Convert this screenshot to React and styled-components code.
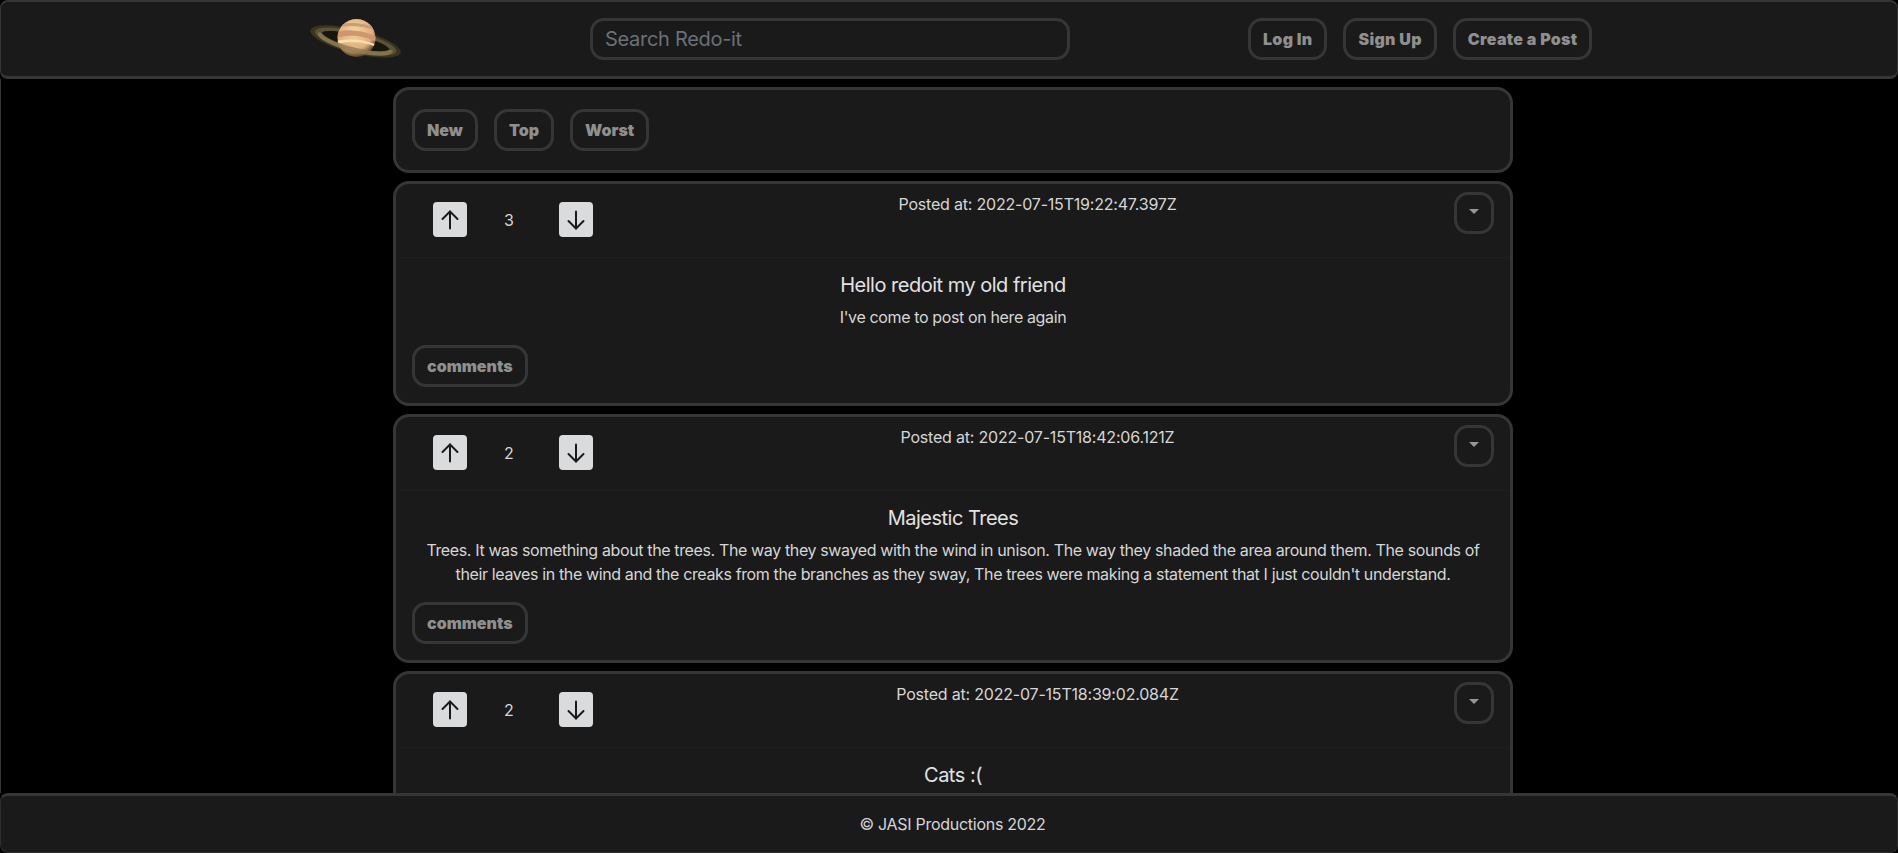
import React from 'react';
import styled, { createGlobalStyle } from 'styled-components';

const GlobalStyle = createGlobalStyle`
  html, body {
    margin: 0;
    height: 100%;
    overflow: hidden;
    background: #000;
    font-family: Inter, 'Liberation Sans', sans-serif;
  }
  * { box-sizing: border-box; }
`;

const Page = styled.div`
  height: 853px;
  display: flex;
  flex-direction: column;
  background: #000;
`;

const Header = styled.header`
  flex: 0 0 79px;
  display: flex;
  align-items: center;
  padding-left: 307px;
  background: #1a1a1a;
  border: 3px solid #363636;
  border-top-width: 2px;
  border-left-width: 1px;
  border-right-width: 1px;
  border-radius: 8px;
`;

const LogoBox = styled.div`
  width: 95px;
  height: 46px;
  margin-right: 187px;
`;

const SearchBox = styled.input`
  width: 480px;
  height: 42px;
  padding: 0 12px;
  background: #1a1a1a;
  border: 3px solid #363636;
  border-radius: 14px;
  color: #ddd;
  font-family: inherit;
  font-size: 20px;
  letter-spacing: -0.3px;
  outline: none;
  margin-right: 178px;
  &::placeholder { color: #6c7078; opacity: 1; }
`;

const HeaderButtons = styled.div`
  display: flex;
  gap: 16px;
`;

const PillButton = styled.button`
  height: 42px;
  padding: 0 12px;
  background: #1a1a1a;
  border: 3px solid #363636;
  border-radius: 14px;
  color: #8f8f8f;
  font-family: inherit;
  font-size: 16px;
  font-weight: 900;
`;

const HeaderButton = styled(PillButton)`
  letter-spacing: 0.3px;
`;

const FeedWrap = styled.div`
  flex: 1;
  min-height: 0;
  display: flex;
  border-left: 1px solid #363636;
`;

const Feed = styled.main`
  flex: 0 0 1120px;
  margin-left: 392px;
  padding-top: 8px;
  display: flex;
  flex-direction: column;
  gap: 8px;
  overflow: hidden;
`;

const SortCard = styled.section`
  flex: 0 0 86px;
  display: flex;
  align-items: center;
  gap: 16px;
  padding: 0 16px;
  background: #1a1a1a;
  border: 3px solid #363636;
  border-radius: 16px;
`;

const PostCard = styled.article`
  flex: 0 0 auto;
  background: #1a1a1a;
  border: 3px solid #363636;
  border-radius: 16px;
  padding-bottom: 16px;
`;

const PostTop = styled.div`
  height: 74px;
  border-bottom: 1px solid #1e1e1e;
  display: flex;
  align-items: flex-start;
  padding: 0 16px 0 37px;
`;

const Votes = styled.div`
  margin-top: 18px;
  display: flex;
  align-items: center;
`;

const VoteButton = styled.button`
  width: 34px;
  height: 35px;
  padding: 0;
  display: flex;
  align-items: center;
  justify-content: center;
  background: #dadbdd;
  border: none;
  border-radius: 4px;
  color: #1a1a1a;
`;

const Score = styled.span`
  width: 92px;
  padding-right: 8px;
  text-align: center;
  color: #d6d6d6;
  font-size: 16px;
`;

const PostedAt = styled.div`
  flex: 1;
  padding: 9px 0 0 28px;
  text-align: center;
  color: #d6d6d6;
  font-size: 16px;
  line-height: 22px;
  letter-spacing: -0.2px;
`;

const MenuButton = styled.button`
  margin-top: 8px;
  width: 40px;
  height: 42px;
  display: flex;
  align-items: center;
  justify-content: center;
  padding: 0 0 4px;
  background: #1a1a1a;
  border: 3px solid #363636;
  border-radius: 14px;
`;

const Caret = styled.span`
  width: 0;
  height: 0;
  border-left: 5px solid transparent;
  border-right: 5px solid transparent;
  border-top: 5px solid #969696;
`;

const PostBody = styled.div`
  padding: 12px 24px 0;
  text-align: center;
  color: #d6d6d6;
`;

const PostTitle = styled.h2`
  margin: 0 0 5px;
  font-size: 20px;
  line-height: 30px;
  font-weight: 400;
  letter-spacing: -0.5px;
  color: #e2e2e2;
`;

const PostText = styled.p`
  margin: 0;
  font-size: 16px;
  line-height: 24px;
  letter-spacing: -0.37px;
`;

const CommentsRow = styled.div`
  padding: 16px 16px 0;
`;

const Footer = styled.footer`
  flex: 0 0 60px;
  display: flex;
  align-items: center;
  justify-content: center;
  padding-left: 7px;
  background: #1a1a1a;
  border: 1px solid #2e2e2e;
  border-top: 3px solid #363636;
  border-radius: 8px;
  color: #d6d6d6;
  font-size: 16px;
  letter-spacing: -0.28px;
`;

function ArrowUp() {
  return (
    <svg width="24" height="24" viewBox="0 0 24 24" fill="none" stroke="currentColor" strokeWidth="2" strokeLinecap="round" strokeLinejoin="round">
      <path d="M12 20.5V3.5" />
      <path d="M4.5 11L12 3.5L19.5 11" />
    </svg>
  );
}

function ArrowDown() {
  return (
    <svg width="24" height="24" viewBox="0 0 24 24" fill="none" stroke="currentColor" strokeWidth="2" strokeLinecap="round" strokeLinejoin="round">
      <path d="M12 3.5V20.5" />
      <path d="M4.5 13L12 20.5L19.5 13" />
    </svg>
  );
}

// planet at (48.5, 22), ring tilted 14deg around (47.5, 25.5)
function SaturnLogo() {
  return (
    <svg width="95" height="46" viewBox="0 0 95 46">
      <defs>
        <radialGradient id="planetShade" cx="45%" cy="32%" r="72%">
          <stop offset="0%" stopColor="#f4d3a4" />
          <stop offset="66%" stopColor="#e0ae7c" />
          <stop offset="100%" stopColor="#3e2a18" />
        </radialGradient>
        <clipPath id="planetClip">
          <circle cx="48.5" cy="22" r="19" />
        </clipPath>
        <filter id="soft">
          <feGaussianBlur stdDeviation="0.5" />
        </filter>
      </defs>
      <g filter="url(#soft)">
        <g transform="rotate(14 47.5 25.5)">
          <ellipse cx="47.5" cy="25.5" rx="46.5" ry="12" fill="#37351f" />
          <ellipse cx="47.5" cy="25.5" rx="42" ry="10" fill="#5a5238" />
          <ellipse cx="47.5" cy="25.5" rx="35" ry="6.5" fill="#14130e" />
        </g>
        <circle cx="48.5" cy="22" r="19" fill="url(#planetShade)" />
        <g clipPath="url(#planetClip)">
          <path d="M28 9Q48 4 69 12L69 15Q48 7 28 12Z" fill="#c99c72" />
          <path d="M28 16Q48 11 69 21L69 26Q48 16 28 22Z" fill="#cf9670" />
          <path d="M28 25Q48 20 69 29L69 31Q48 23 28 28Z" fill="#f9dfad" />
        </g>
        <g transform="rotate(14 47.5 25.5)">
          <path d="M11 25.5A36.5 8.5 0 0 0 84 25.5" fill="none" stroke="#8d7c56" strokeWidth="4.5" opacity="0.8" />
        </g>
      </g>
    </svg>
  );
}

const posts = [
  { id: 1, score: 3, posted: '2022-07-15T19:22:47.397Z', title: 'Hello redoit my old friend', text: "I've come to post on here again", showComments: true },
  { id: 2, score: 2, posted: '2022-07-15T18:42:06.121Z', title: 'Majestic Trees', text: "Trees. It was something about the trees. The way they swayed with the wind in unison. The way they shaded the area around them. The sounds of their leaves in the wind and the creaks from the branches as they sway, The trees were making a statement that I just couldn't understand.", showComments: true },
  { id: 3, score: 2, posted: '2022-07-15T18:39:02.084Z', title: 'Cats :(', text: '', showComments: false },
];

export default function App() {
  return (
    <Page>
      <GlobalStyle />
      <Header>
        <LogoBox><SaturnLogo /></LogoBox>
        <SearchBox placeholder="Search Redo-it" />
        <HeaderButtons>
          <HeaderButton>Log In</HeaderButton>
          <HeaderButton>Sign Up</HeaderButton>
          <HeaderButton>Create a Post</HeaderButton>
        </HeaderButtons>
      </Header>
      <FeedWrap>
        <Feed>
          <SortCard>
            <PillButton>New</PillButton>
            <PillButton>Top</PillButton>
            <PillButton>Worst</PillButton>
          </SortCard>
          {posts.map(post => (
            <PostCard key={post.id}>
              <PostTop>
                <Votes>
                  <VoteButton><ArrowUp /></VoteButton>
                  <Score>{post.score}</Score>
                  <VoteButton><ArrowDown /></VoteButton>
                </Votes>
                <PostedAt>Posted at: {post.posted}</PostedAt>
                <MenuButton><Caret /></MenuButton>
              </PostTop>
              <PostBody>
                <PostTitle>{post.title}</PostTitle>
                <PostText>{post.text}</PostText>
              </PostBody>
              {post.showComments && <CommentsRow><PillButton>comments</PillButton></CommentsRow>}
            </PostCard>
          ))}
        </Feed>
      </FeedWrap>
      <Footer>© JASI Productions 2022</Footer>
    </Page>
  );
}
